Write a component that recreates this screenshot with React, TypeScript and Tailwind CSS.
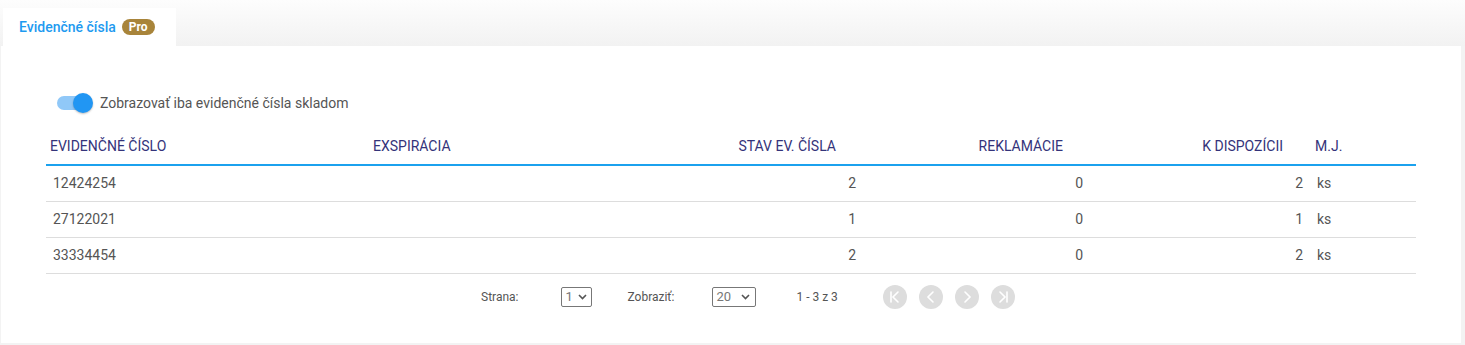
import React from 'react';

type Row = { id: string; exp: string; stav: number; rekl: number; disp: number; mj: string };

const rows: Row[] = [
    { id: '12424254', exp: '', stav: 2, rekl: 0, disp: 2, mj: 'ks' },
    { id: '27122021', exp: '', stav: 1, rekl: 0, disp: 1, mj: 'ks' },
    { id: '33334454', exp: '', stav: 2, rekl: 0, disp: 2, mj: 'ks' },
];

const cols = 'grid grid-cols-[323px_271px_220px_227px_220px_109px]';

const Chevron = () => (
    <svg width="9" height="6" viewBox="0 0 9 6" className="shrink-0">
        <path d="M1 1l3.5 3.5L8 1" fill="none" stroke="#555" strokeWidth="1.6" />
    </svg>
);

const PageButton = ({ kind }: { kind: 'first' | 'prev' | 'next' | 'last' }) => {
    const paths: Record<string, React.ReactNode> = {
        first: (
            <>
                <path d="M8 7v10" />
                <path d="M15 7l-5 5 5 5" />
            </>
        ),
        prev: <path d="M14 7l-5 5 5 5" />,
        next: <path d="M10 7l5 5-5 5" />,
        last: (
            <>
                <path d="M9 7l5 5-5 5" />
                <path d="M16 7v10" />
            </>
        ),
    };
    return (
        <div className="flex size-[24px] items-center justify-center rounded-full bg-[#dddddd]">
            <svg width="24" height="24" viewBox="0 0 24 24" fill="none" stroke="#fff" strokeWidth="1.6" strokeLinecap="round">
                {paths[kind]}
            </svg>
        </div>
    );
};

export default function App() {
    return (
        <div className="h-[345px] w-[1465px] bg-[#f3f3f3] font-['Roboto','Liberation_Sans',sans-serif]">
            <div className="flex h-[46px] bg-gradient-to-b from-[#fdfdfd] to-[#f2f2f2] pl-[3px] pt-[8px]">
                <div className="flex h-[38px] w-[173px] items-center gap-[6px] bg-white pl-[16px]">
                    <span className="text-[14px] font-medium text-[#1e9af0]">Evidenčné čísla</span>
                    <span className="flex h-[16px] items-center rounded-full bg-[#a8843a] px-[7px] text-[12px] font-bold text-white">
                        Pro
                    </span>
                </div>
            </div>
            <div className="ml-[1px] h-[297px] w-[1460px] bg-white pt-[45px]">
                <div className="flex h-[24px] items-center pl-[56px]">
                    <div className="relative h-[14px] w-[28px] rounded-full bg-[#90c8f8]">
                        <div className="absolute left-[16px] top-[-3px] size-[20px] rounded-full bg-[#2196f3] shadow-[0_1px_2px_rgba(0,0,0,0.25)]" />
                    </div>
                    <span className="ml-[15px] text-[14px] text-[#555]">Zobrazovať iba evidenčné čísla skladom</span>
                </div>
                <div className="ml-[45px] mt-[12px] w-[1370px]">
                    <div className={`${cols} h-[39px] items-center border-b-2 border-[#1ba1ee] pt-[1px] text-[14px] text-[#34337a]`}>
                        <div className="pl-[4px]">EVIDENČNÉ ČÍSLO</div>
                        <div className="pl-[4px]">EXSPIRÁCIA</div>
                        <div className="pr-[24px] text-right">STAV EV. ČÍSLA</div>
                        <div className="pr-[24px] text-right">REKLAMÁCIE</div>
                        <div className="pr-[24px] text-right">K DISPOZÍCII</div>
                        <div className="pl-[8px]">M.J.</div>
                    </div>
                    {rows.map((r) => (
                        <div
                            key={r.id}
                            className={`${cols} h-[36px] items-center border-b border-[#dddddd] text-[14px] text-[#555]`}
                        >
                            <div className="pl-[7px]">{r.id}</div>
                            <div>{r.exp}</div>
                            <div className="pr-[4px] text-right">{r.stav}</div>
                            <div className="pr-[4px] text-right">{r.rekl}</div>
                            <div className="pr-[4px] text-right">{r.disp}</div>
                            <div className="pl-[10px]">{r.mj}</div>
                        </div>
                    ))}
                    <div className="flex h-[46px] items-center pl-[435px] text-[12px] text-[#555]">
                        <span>Strana:</span>
                        <div className="ml-[43px] flex h-[20px] w-[31px] items-center justify-between rounded-[2px] border border-[#777] pl-[3px] pr-[4px]">
                            <span className="text-[13px] text-[#777]">1</span>
                            <Chevron />
                        </div>
                        <span className="ml-[35px]">Zobraziť:</span>
                        <div className="ml-[38px] flex h-[20px] w-[44px] items-center justify-between rounded-[2px] border border-[#777] pl-[3px] pr-[5px]">
                            <span className="text-[13px] text-[#777]">20</span>
                            <Chevron />
                        </div>
                        <span className="ml-[40px]">1 - 3 z 3</span>
                        <div className="ml-[45px] flex gap-[12px]">
                            <PageButton kind="first" />
                            <PageButton kind="prev" />
                            <PageButton kind="next" />
                            <PageButton kind="last" />
                        </div>
                    </div>
                </div>
            </div>
        </div>
    );
}
